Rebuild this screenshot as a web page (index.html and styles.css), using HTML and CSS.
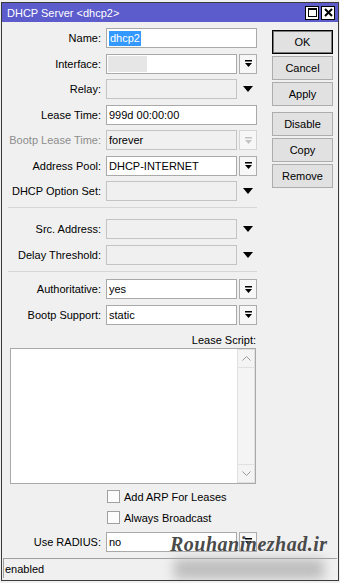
FILE: index.html
```html
<!DOCTYPE html>
<html>
<head lang="en">
    <meta charset="UTF-8">
    <title>DHCP Server</title>
    <link rel="stylesheet" href="styles.css">
</head>
<body>
<div class="window">
    <div class="titlebar">
        <span class="title">DHCP Server &lt;dhcp2&gt;</span>
        <div class="tb-btns">
            <span class="tb-btn"><svg width="9" height="9" viewBox="0 0 9 9"><rect x="0.5" y="0.5" width="8" height="8" fill="none" stroke="#000"/><rect x="0" y="0" width="9" height="2" fill="#000"/></svg></span>
            <span class="tb-btn"><svg width="9" height="9" viewBox="0 0 9 9"><path d="M1 1L8 8M8 1L1 8" stroke="#000" stroke-width="2"/></svg></span>
        </div>
    </div>
    <div class="main">
        <div class="form">
            <!--常规-->
            <div class="rows">
                <div class="row"><span class="lbl">Name:</span><div class="input wide"><span class="sel">dhcp2</span></div></div>
                <div class="row"><span class="lbl">Interface:</span><div class="input iface"><span class="blank"></span></div><span class="drop"><svg width="9" height="9" viewBox="0 0 9 9"><rect x="1" y="1" width="7" height="1.5" fill="#000"/><path d="M1 4H8L4.5 8Z" fill="#000"/></svg></span></div>
                <div class="row"><span class="lbl">Relay:</span><div class="input off"></div><span class="arrow"><svg width="10" height="6" viewBox="0 0 10 6"><path d="M0 0H10L5 6Z" fill="#000"/></svg></span></div>
                <div class="row"><span class="lbl">Lease Time:</span><div class="input wide">999d 00:00:00</div></div>
                <div class="row"><span class="lbl dim">Bootp Lease Time:</span><div class="input off">forever</div><span class="drop off"><svg width="9" height="9" viewBox="0 0 9 9"><rect x="1" y="1" width="7" height="1.5" fill="#c4c4c4"/><path d="M1 4H8L4.5 8Z" fill="#c4c4c4"/></svg></span></div>
                <div class="row"><span class="lbl">Address Pool:</span><div class="input">DHCP-INTERNET</div><span class="drop"><svg width="9" height="9" viewBox="0 0 9 9"><rect x="1" y="1" width="7" height="1.5" fill="#000"/><path d="M1 4H8L4.5 8Z" fill="#000"/></svg></span></div>
                <div class="row"><span class="lbl">DHCP Option Set:</span><div class="input off"></div><span class="arrow"><svg width="10" height="6" viewBox="0 0 10 6"><path d="M0 0H10L5 6Z" fill="#000"/></svg></span></div>
            </div>
            <div class="sep"></div>
            <div class="rows">
                <div class="row"><span class="lbl">Src. Address:</span><div class="input off"></div><span class="arrow"><svg width="10" height="6" viewBox="0 0 10 6"><path d="M0 0H10L5 6Z" fill="#000"/></svg></span></div>
                <div class="row"><span class="lbl">Delay Threshold:</span><div class="input off"></div><span class="arrow"><svg width="10" height="6" viewBox="0 0 10 6"><path d="M0 0H10L5 6Z" fill="#000"/></svg></span></div>
            </div>
            <div class="sep sep2"></div>
            <div class="rows">
                <div class="row"><span class="lbl">Authoritative:</span><div class="input">yes</div><span class="drop"><svg width="9" height="9" viewBox="0 0 9 9"><rect x="1" y="1" width="7" height="1.5" fill="#000"/><path d="M1 4H8L4.5 8Z" fill="#000"/></svg></span></div>
                <div class="row"><span class="lbl">Bootp Support:</span><div class="input">static</div><span class="drop"><svg width="9" height="9" viewBox="0 0 9 9"><rect x="1" y="1" width="7" height="1.5" fill="#000"/><path d="M1 4H8L4.5 8Z" fill="#000"/></svg></span></div>
            </div>
            <div class="script-lbl">Lease Script:</div>
            <div class="textarea">
                <div class="vscroll">
                    <span class="sb-btn"><svg width="9" height="5" viewBox="0 0 9 5"><path d="M0.5 4.5L4.5 0.5L8.5 4.5" fill="none" stroke="#9a9a9a"/></svg></span>
                    <span class="sb-btn"><svg width="9" height="5" viewBox="0 0 9 5"><path d="M0.5 0.5L4.5 4.5L8.5 0.5" fill="none" stroke="#9a9a9a"/></svg></span>
                </div>
            </div>
            <div class="checks">
                <div class="check"><span class="box"></span>Add ARP For Leases</div>
                <div class="check"><span class="box"></span>Always Broadcast</div>
            </div>
            <div class="row radius"><span class="lbl">Use RADIUS:</span><div class="input">no</div><span class="drop"><svg width="9" height="9" viewBox="0 0 9 9"><rect x="1" y="1" width="7" height="1.5" fill="#000"/><path d="M1 4H8L4.5 8Z" fill="#000"/></svg></span></div>
        </div>
        <div class="side">
            <div class="group">
                <button class="btn default">OK</button>
                <button class="btn">Cancel</button>
                <button class="btn">Apply</button>
            </div>
            <div class="group">
                <button class="btn">Disable</button>
                <button class="btn">Copy</button>
                <button class="btn">Remove</button>
            </div>
        </div>
    </div>
    <div class="status">enabled</div>
    <!--水印-->
    <div class="wm-shadow"></div>
    <div class="watermark">Rouhaninezhad.ir</div>
</div>
</body>
</html>
```

FILE: styles.css
```css
* {
    margin: 0;
    padding: 0;
}

body {
    background-color: #f0f0f0;
    font-family: "Liberation Sans", Arial, sans-serif;
    font-size: 11px;
    color: #000;
}

.window {
    box-sizing: border-box;
    width: 338px;
    height: 579px;
    margin: 2px 0 0 1px;
    border: 1px solid #3a3a3a;
    background-color: #f0f0f0;
    display: flex;
    flex-direction: column;
    position: relative;
    overflow: hidden;
}

.titlebar {
    height: 19px;
    flex: none;
    display: flex;
    align-items: center;
    padding: 0 3px 0 5px;
    background-color: #5c5ccc;
    color: #fff;
}

.title {
    flex: 1;
    font-size: 11px;
}

.tb-btns {
    display: flex;
    gap: 2px;
}

.tb-btn {
    box-sizing: border-box;
    width: 14px;
    height: 14px;
    border: 1px solid #000;
    background-color: #fff;
    display: flex;
    align-items: center;
    justify-content: center;
}

.main {
    flex: 1;
    display: flex;
}

.form {
    width: 251px;
    padding: 6px 0 0 4px;
}

.rows {
    display: flex;
    flex-direction: column;
    gap: 5.5px;
}

.row {
    display: flex;
    align-items: center;
    height: 20px;
}

.lbl {
    width: 95px;
    margin-right: 5px;
    text-align: right;
    white-space: nowrap;
}

.lbl.dim {
    color: #8d8d8d;
}

.input {
    box-sizing: border-box;
    width: 131px;
    height: 20px;
    padding-left: 2px;
    border: 1px solid #a9a9a9;
    background-color: #fff;
    display: flex;
    align-items: center;
    white-space: nowrap;
}

.input.wide {
    width: 151px;
}

.input.off {
    background-color: #f0f0f0;
    border-color: #c4c4c4;
}

.input.iface {
    padding: 1px;
}

.iface .blank {
    width: 39px;
    height: 100%;
    background-color: #e6e6e6;
}

.sel {
    background-color: #3399ff;
    color: #fff;
    line-height: 15px;
    padding: 0 1px;
}

.drop {
    box-sizing: border-box;
    width: 18px;
    height: 20px;
    margin-left: 2px;
    border: 1px solid #adadad;
    background-color: #f7f7f7;
    display: flex;
    align-items: center;
    justify-content: center;
}

.drop.off {
    border-color: #d4d4d4;
}

.arrow {
    width: 18px;
    margin-left: 2px;
    display: flex;
    justify-content: center;
}

.sep {
    width: 249px;
    margin: 6px 0 11px 2px;
    border-top: 1px solid #d6d6d6;
}

.sep.sep2 {
    margin: 6.5px 0 7px 2px;
}

.script-lbl {
    width: 250px;
    height: 15px;
    margin-top: 8px;
    line-height: 15px;
    text-align: right;
}

.textarea {
    box-sizing: border-box;
    width: 246px;
    height: 136px;
    margin-left: 4px;
    border: 1px solid #a9a9a9;
    background-color: #fff;
    display: flex;
    justify-content: flex-end;
}

.vscroll {
    box-sizing: border-box;
    width: 18px;
    background-color: #f4f4f4;
    border: 1px solid #e0e0e0;
    display: flex;
    flex-direction: column;
    justify-content: space-between;
}

.sb-btn {
    height: 17px;
    display: flex;
    align-items: center;
    justify-content: center;
    border-bottom: 1px solid #e0e0e0;
}

.sb-btn + .sb-btn {
    border-bottom: none;
    border-top: 1px solid #e0e0e0;
}

.checks {
    margin-top: 3px;
    display: flex;
    flex-direction: column;
    gap: 1px;
}

.check {
    height: 20px;
    margin-left: 101px;
    display: flex;
    align-items: center;
}

.check .box {
    width: 11px;
    height: 11px;
    margin-right: 4px;
    border: 1px solid #a0a0a0;
    background-color: #fcfcfc;
}

.row.radius {
    margin-top: 4px;
}

.side {
    width: 61px;
    margin-left: 15px;
    padding-top: 8px;
    display: flex;
    flex-direction: column;
    gap: 6px;
}

.group {
    display: flex;
    flex-direction: column;
    gap: 2px;
}

.btn {
    height: 24px;
    border: 1px solid #adadad;
    background-color: #e1e1e1;
    font-family: inherit;
    font-size: 11px;
    color: #000;
}

.btn.default {
    border-color: #000;
    box-shadow: inset 0 0 0 1px #7a7a7a;
}

.status {
    box-sizing: border-box;
    height: 20px;
    flex: none;
    margin: 0 1px 2px 1px;
    padding-left: 1px;
    border-top: 1px solid #a0a0a0;
    border-left: 1px solid #a0a0a0;
    display: flex;
    align-items: center;
}

.watermark {
    position: absolute;
    left: 168px;
    top: 531px;
    font-family: "Liberation Serif", serif;
    font-size: 20px;
    font-weight: bold;
    font-style: italic;
    line-height: 20px;
    letter-spacing: 0.5px;
    color: #4a4a4a;
}

.wm-shadow {
    position: absolute;
    left: 172px;
    top: 556px;
    width: 150px;
    height: 20px;
    background-color: #a8a8a8;
    filter: blur(6px);
    opacity: 0.7;
}
```
